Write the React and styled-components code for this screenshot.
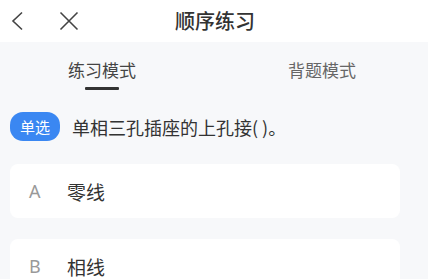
import React from 'react';
import styled, { createGlobalStyle } from 'styled-components';

const GlobalStyle = createGlobalStyle`
  body {
    margin: 0;
    background: #f7f8fa;
    font-family: 'Noto Sans CJK SC', 'Noto Sans', sans-serif;
    color: #333;
  }
`;

const options = [
  { key: 'A', text: '零线' },
  { key: 'B', text: '相线' },
];

const App = () => {
  return (
    <Page>
      <GlobalStyle />
      <Header>
        <IconGroup>
          <IconButton>
            <svg width='13' height='20' viewBox='0 0 13 20'>
              <path d='M11 1.5 L2 10 L11 18.5' fill='none' stroke='#444' strokeWidth='1.6' />
            </svg>
          </IconButton>
          <IconButton>
            <svg width='20' height='20' viewBox='0 0 20 20'>
              <path d='M1.5 1.5 L18.5 18.5 M18.5 1.5 L1.5 18.5' fill='none' stroke='#444' strokeWidth='1.6' />
            </svg>
          </IconButton>
        </IconGroup>
        <Title>顺序练习</Title>
      </Header>
      <Tabs>
        <Tab active>
          练习模式
          <Underline />
        </Tab>
        <Tab>背题模式</Tab>
      </Tabs>
      <Body>
        <Question>
          <Tag>单选</Tag>
          <QuestionText>单相三孔插座的上孔接( )。</QuestionText>
        </Question>
        <OptionList>
          {options.map((o) => (
            <Option key={o.key}>
              <OptionKey>{o.key}</OptionKey>
              <OptionText>{o.text}</OptionText>
            </Option>
          ))}
        </OptionList>
      </Body>
    </Page>
  );
};

export default App;

const Page = styled.div`
  width: 428px;
  height: 279px;
  overflow: hidden;
`;

const Header = styled.header`
  position: relative;
  height: 42px;
  background: #fff;
  display: flex;
  align-items: center;
  justify-content: center;
`;

const IconGroup = styled.div`
  position: absolute;
  left: 11px;
  top: 11px;
  display: flex;
  gap: 35px;
`;

const IconButton = styled.span`
  display: flex;
  height: 20px;
  align-items: center;
`;

const Title = styled.h1`
  margin: 0;
  font-size: 20px;
  font-weight: 500;
  color: #333;
  line-height: 24px;
  margin-left: 2px;
`;

const Tabs = styled.div`
  display: flex;
  gap: 150px;
  padding: 16px 0 0 67px;
`;

const Tab = styled.div`
  display: flex;
  flex-direction: column;
  align-items: center;
  width: 70px;
  font-size: 17px;
  line-height: 24px;
  color: ${(p) => (p.active ? '#444' : '#666')};
`;

const Underline = styled.span`
  width: 34px;
  height: 3px;
  margin-top: 5px;
  background: #333;
  border-radius: 1px;
`;

const Body = styled.div`
  padding: 22px 28px 0 10px;
`;

const Question = styled.div`
  display: flex;
  align-items: center;
  gap: 12px;
`;

const Tag = styled.span`
  width: 50px;
  height: 29px;
  border-radius: 13px;
  background: #3a87f2;
  color: #fff;
  font-size: 15px;
  display: flex;
  align-items: center;
  justify-content: center;
`;

const QuestionText = styled.span`
  font-size: 18px;
  color: #333;
`;

const OptionList = styled.div`
  display: flex;
  flex-direction: column;
  gap: 21px;
  margin-top: 23px;
`;

const Option = styled.div`
  height: 54px;
  background: #fff;
  border-radius: 8px;
  display: flex;
  align-items: center;
  padding-left: 19px;
`;

const OptionKey = styled.span`
  width: 38px;
  font-family: 'Noto Sans', sans-serif;
  font-size: 18px;
  color: #999;
`;

const OptionText = styled.span`
  font-size: 19px;
  color: #333;
`;
